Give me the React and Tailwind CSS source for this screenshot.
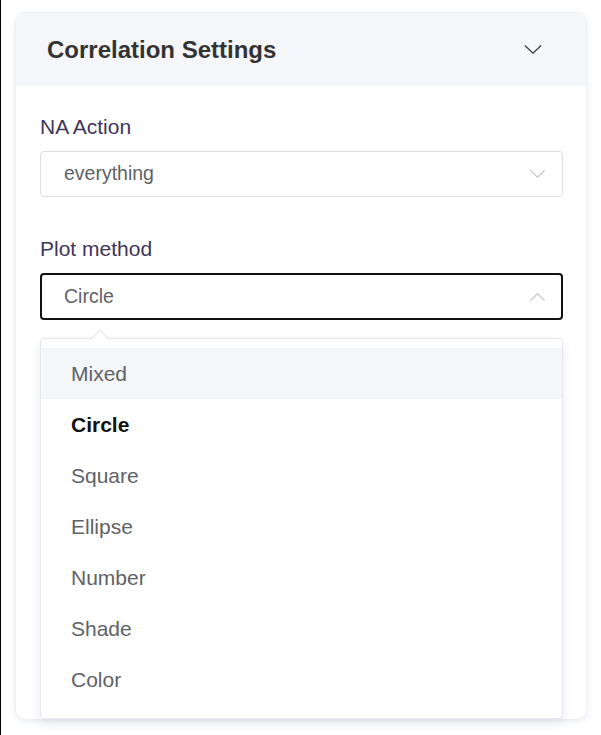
import { useState } from 'react';

const options = ['Mixed', 'Circle', 'Square', 'Ellipse', 'Number', 'Shade', 'Color'];

function Chevron({ up = false, className = '' }) {
    return (
        <svg viewBox="0 0 20 10" className={className} fill="none" stroke="currentColor" strokeWidth="1.4">
            {up ? <path d="M1 9.5 L10 1 L19 9.5" /> : <path d="M1 0.5 L10 9 L19 0.5" />}
        </svg>
    );
}

export default function App() {
    const [naAction] = useState('everything');
    const [method, setMethod] = useState('Circle');
    const [hovered, setHovered] = useState('Mixed');

    return (
        <div
            className="h-[735px] border-l border-black bg-white pt-3 pl-[14px]"
            style={{ fontFamily: '"Liberation Sans", Arial, sans-serif' }}
        >
            <div className="w-[572px] h-[708px] rounded-[10px] border border-[#eef0f5] bg-white shadow-[0_2px_6px_rgba(200,205,220,0.35)]">
                <div className="h-[73px] flex items-center justify-between pl-[31px] pr-[44px] bg-[#f5f6fa] rounded-t-[10px]">
                    <h2 className="text-[24px] font-bold text-[#333333]">Correlation Settings</h2>
                    <Chevron className="w-[18px] h-[9px] text-[#3a3a3a]" />
                </div>

                <div className="pl-[24px] pr-[23px] pt-[29px]">
                    <div className="text-[21px] leading-6 text-[#41355a] mb-3">NA Action</div>
                    <div className="h-[46px] flex items-center justify-between rounded border border-[#dcdfe6] pl-[23px] pr-[16px]">
                        <span className="text-[19.5px] text-[#606266]">{naAction}</span>
                        <Chevron className="w-[17px] h-[8px] text-[#c0c4cc]" />
                    </div>

                    <div className="text-[21px] leading-6 text-[#41355a] mt-[40px] mb-3">Plot method</div>
                    <div className="relative">
                        <div className="h-[47px] flex items-center justify-between rounded border-2 border-[#111111] pl-[22px] pr-[15px]">
                            <span className="text-[19.5px] text-[#606266]">{method}</span>
                            <Chevron up className="w-[17px] h-[8px] text-[#c0c4cc]" />
                        </div>

                        <div className="absolute left-0 right-0 top-[65px] z-10">
                            <div className="absolute -top-[6px] left-[54px] w-3 h-3 rotate-45 bg-white border-l border-t border-[#e4e7ed]" />
                            <div className="rounded border border-[#e4e7ed] bg-white pt-[9px] pb-[13px] shadow-[0_4px_12px_rgba(0,0,0,0.08)]">
                                {options.map(opt => (
                                    <div
                                        key={opt}
                                        onMouseEnter={() => setHovered(opt)}
                                        onClick={() => setMethod(opt)}
                                        className={
                                            'h-[51px] flex items-center pl-[30px] text-[21px] cursor-pointer ' +
                                            (hovered === opt ? 'bg-[#f5f6fa] ' : '') +
                                            (method === opt ? 'font-bold text-[#111111]' : 'text-[#606266]')
                                        }
                                    >
                                        {opt}
                                    </div>
                                ))}
                            </div>
                        </div>
                    </div>
                </div>
            </div>
        </div>
    );
}
